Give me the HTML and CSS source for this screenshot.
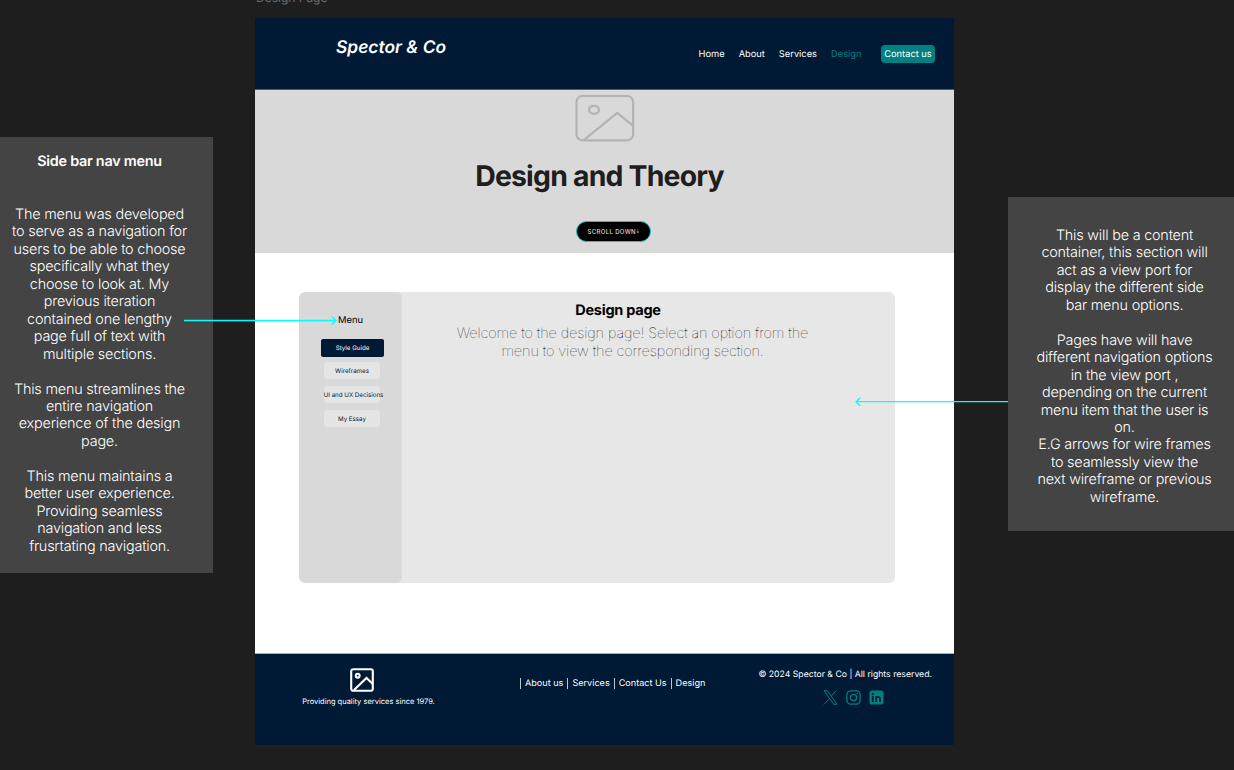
FILE: index.html
```html
<!DOCTYPE html>
<html lang="en">
<head>
<meta charset="utf-8">
<title>Design page</title>
<link rel="stylesheet" href="styles.css">
</head>
<body>
<main class="canvas">
  <aside class="note note-left">
    <h2 class="note-title">Side bar nav menu</h2>
    <p class="note-text">The menu was developed<br>to serve as a navigation for<br>users to be able to choose<br>specifically what they<br>choose to look at. My<br>previous iteration<br>contained one lengthy<br>page full of text with<br>multiple sections.</p>
    <p class="note-text">This menu streamlines the<br>entire navigation<br>experience of the design<br>page.</p>
    <p class="note-text">This menu maintains a<br>better user experience.<br>Providing seamless<br>navigation and less<br>frusrtating navigation.</p>
  </aside>

  <section class="frame">
    <span class="frame-label">Design Page</span>
    <header class="header">
      <div class="brand">Spector &amp; Co</div>
      <nav class="nav">
        <a class="nav-home">Home</a>
        <a class="nav-about">About</a>
        <a class="nav-services">Services</a>
        <a class="nav-design">Design</a>
        <a class="contact">Contact us</a>
      </nav>
    </header>

    <div class="hero">
      <svg class="hero-image" width="60" height="48" viewBox="0 0 60 48" fill="none" stroke="#b3b3b3" stroke-width="2.2">
        <rect x="1.5" y="2" width="56.6" height="44.3" rx="6"/>
        <ellipse cx="19" cy="15.8" rx="5" ry="4"/>
        <path d="M9 45.800 42.300 19 58 31.600"/>
      </svg>
      <h1 class="hero-title">Design and Theory</h1>
      <button class="scroll">SCROLL DOWN<span class="scroll-arrow">↓</span></button>
    </div>

    <div class="content">
      <div class="panel">
        <div class="menu">
          <div class="menu-title">Menu</div>
          <div class="menu-item active">Style Guide</div>
          <div class="menu-item">Wireframes</div>
          <div class="menu-item"><span class="menu-long">UI and UX Decisions</span></div>
          <div class="menu-item">My Essay</div>
        </div>
        <div class="view">
          <h2 class="view-title">Design page</h2>
          <p class="view-text">Welcome to the design page! Select an option from the<br>menu to view the corresponding section.</p>
        </div>
      </div>
    </div>

    <footer class="footer">
      <div class="foot-brand">
        <svg class="foot-logo" width="24" height="24" viewBox="0 0 24 24" fill="none" stroke="#fff" stroke-width="2.1">
          <rect x="1.2" y="1.2" width="21.6" height="21.6" rx="2"/>
          <circle cx="7.7" cy="7.7" r="1.9"/>
          <path d="M4 22 16.500 10 22.800 16"/>
        </svg>
        <span class="tagline">Providing quality services since 1979.</span>
      </div>
      <div class="foot-links"><i class="bar"></i><span>About us</span><i class="bar"></i><span>Services</span><i class="bar"></i><span>Contact Us</span><i class="bar"></i><span>Design</span></div>
      <div class="foot-legal">
        <span class="copyright">© 2024 Spector &amp; Co | All rights reserved.</span>
        <div class="social">
          <svg width="15" height="15" viewBox="0 0 15 15" fill="none" stroke="#008080" stroke-width="1">
            <path d="M1 .7h3.300L14 14.300h-3.300zM13.200.5 8.400 6.100M6.500 8.600.9 14.500"/>
          </svg>
          <svg width="15" height="15" viewBox="0 0 15 15" fill="none" stroke="#008080" stroke-width="1.3">
            <rect x=".9" y=".9" width="13.2" height="13.2" rx="3.8"/>
            <circle cx="7.5" cy="7.5" r="3.1"/>
            <circle cx="11.3" cy="3.7" r=".8" fill="#008080" stroke="none"/>
          </svg>
          <svg width="15" height="15" viewBox="0 0 15 15">
            <rect x=".5" y=".5" width="14" height="14" rx="2.6" fill="#008080"/>
            <g fill="#001a36"><circle cx="3.8" cy="3.9" r="1.1"/><rect x="2.9" y="5.9" width="1.8" height="6.2"/></g>
            <path d="M7.100 12.100V5.900M7.100 12.100V9q0-2.100 2-2.100t2 2.100v3.100" fill="none" stroke="#001a36" stroke-width="1.7"/>
          </svg>
        </div>
      </div>
    </footer>
  </section>

  <aside class="note note-right">
    <p class="note-text">This will be a content<br>container, this section will<br>act as a view port for<br>display the different side<br>bar menu options.</p>
    <p class="note-text">Pages have will have<br>different navigation options<br>in the view port ,<br>depending on the current<br>menu item that the user is<br>on.<br>E.G arrows for wire frames<br>to seamlessly view the<br>next wireframe or previous<br>wireframe.</p>
  </aside>

  <svg class="connector connector-left" width="154" height="10" viewBox="0 0 154 10" fill="none" stroke="#00ffff" stroke-width="1.3">
    <path d="M0 4.500h152M147.800.5 152 4.500l-4.200 4"/>
  </svg>
  <svg class="connector connector-right" width="154" height="10" viewBox="0 0 154 10" fill="none" stroke="#00ffff" stroke-width="1.3">
    <path d="M153 4.700H1M5.200.7 1 4.700l4.200 4"/>
  </svg>
</main>
</body>
</html>
```
FILE: styles.css
```css
* { box-sizing: border-box; }
body {
  margin: 0;
  background: #1e1e1e;
  font-family: Inter, "Liberation Sans", sans-serif;
  text-rendering: geometricPrecision;
}
h1, h2, p { margin: 0; }

.canvas {
  position: relative;
  width: 1234px;
  height: 770px;
  overflow: hidden;
  display: flex;
  justify-content: space-between;
  align-items: flex-start;
}

.note { background: #444; color: #fff; text-align: center; white-space: nowrap; }
.note-left { width: 213px; height: 436px; margin-top: 137px; padding: 16px 14px 0 0; }
.note-right { width: 226px; height: 334px; margin-top: 197px; padding: 30px 0 0 7px; }
.note-title { font-size: 14.4px; font-weight: 600; line-height: 18px; letter-spacing: -0.25px; margin-bottom: 35px; }
.note-text { font-size: 14.4px; font-weight: 350; line-height: 17.46px; letter-spacing: -0.2px; margin-bottom: 17.46px; }

.frame { position: relative; width: 699px; height: 727px; margin: 18px 12px 0 0; background: #fff; }
.frame-label { position: absolute; left: 1px; top: -28px; color: #6c6c6c; font-size: 12px; line-height: 16px; }

.header {
  display: flex;
  justify-content: space-between;
  height: 72px;
  padding: 0 19px 0 81px;
  background: #001a36;
  border-bottom: 1px solid #4b5c75;
  color: #fff;
}
.brand { padding-top: 19px; font-size: 17.4px; line-height: 22px; font-weight: 600; font-style: italic; }
.nav { display: flex; align-items: flex-start; padding-top: 31px; font-size: 9.3px; line-height: 12px; }
.nav-home, .nav-about, .nav-services { margin-right: 14px; }
.nav-design { margin-right: 19.5px; color: #008080; }
.contact {
  width: 54px;
  height: 18px;
  margin-top: -4px;
  padding-top: 4px;
  border-radius: 4px;
  background: #008080;
  text-align: center;
  white-space: nowrap;
}

.hero { display: flex; flex-direction: column; align-items: center; height: 163px; padding-top: 4px; background: #d9d9d9; }
.hero-title { margin: 16px 10px 0 0; font-size: 28.4px; line-height: 36px; font-weight: 700; letter-spacing: -0.8px; color: #1e1e1e; }
.scroll {
  width: 75px;
  height: 21px;
  margin: 27px 0 0 18px;
  padding: 0;
  border: 1px solid #10c8c8;
  border-radius: 11px;
  background: #000;
  color: #e8d6d0;
  font: 500 6px/19px Inter, sans-serif;
  letter-spacing: 0.35px;
}
.scroll-arrow { display: inline-block; margin: 0 -1px; transform: scaleX(0.5); }

.content { height: 400px; padding: 39px 59px 0 44px; }
.panel { display: flex; height: 291px; border-radius: 6px; background: #e7e7e7; overflow: hidden; }
.menu {
  display: flex;
  flex-direction: column;
  align-items: center;
  width: 103px;
  padding-top: 21px;
  border-radius: 6px;
  background: #d9d9d9;
}
.menu-title { font-size: 9.4px; line-height: 16px; margin-bottom: 10px; color: #000; }
.menu-item {
  width: 56px;
  height: 17px;
  margin: 0 0 7px 3px;
  padding-top: 1px;
  border-radius: 3px;
  background: #e5e5e5;
  color: #001a36;
  display: flex;
  justify-content: center;
  align-items: center;
  white-space: nowrap;
  font-size: 6.2px;
}
.menu-long { margin-left: 3px; }
.menu-item.active { width: 63px; height: 18px; margin: 0 0 5px 4px; border-radius: 2px; background: #001a36; color: #fff; }
.view { width: 439px; margin-left: 11px; padding-top: 10px; text-align: center; white-space: nowrap; }
.view-title { margin-right: 29px; font-size: 14.5px; line-height: 18px; font-weight: 700; letter-spacing: -0.25px; color: #000; }
.view-text { margin-top: 5px; font-size: 14.5px; line-height: 17.5px; font-weight: 100; letter-spacing: -0.1px; color: #000; }

.footer { display: flex; height: 92px; background: #001a36; border-top: 1px solid #a6aebb; color: #fff; white-space: nowrap; }
.foot-brand { display: flex; flex-direction: column; align-items: center; width: 227px; padding-top: 14px; }
.foot-logo { margin-right: 13px; }
.tagline { margin-top: 5px; font-size: 7.5px; line-height: 10px; }
.foot-links { display: flex; align-items: center; height: 59px; margin-left: 38px; font-size: 9.1px; }
.foot-links span { margin-right: 4px; }
.bar { width: 1px; height: 11px; margin-right: 4px; background: #bcc5ce; }
.foot-legal { display: flex; flex-direction: column; align-items: flex-end; margin-left: auto; padding: 16px 22px 0 0; }
.copyright { font-size: 8.7px; line-height: 11px; }
.social { display: flex; gap: 8px; margin: 9px 48px 0 0; }

.connector { position: absolute; }
.connector-left { left: 184px; top: 316px; }
.connector-right { left: 855px; top: 397px; }
```
